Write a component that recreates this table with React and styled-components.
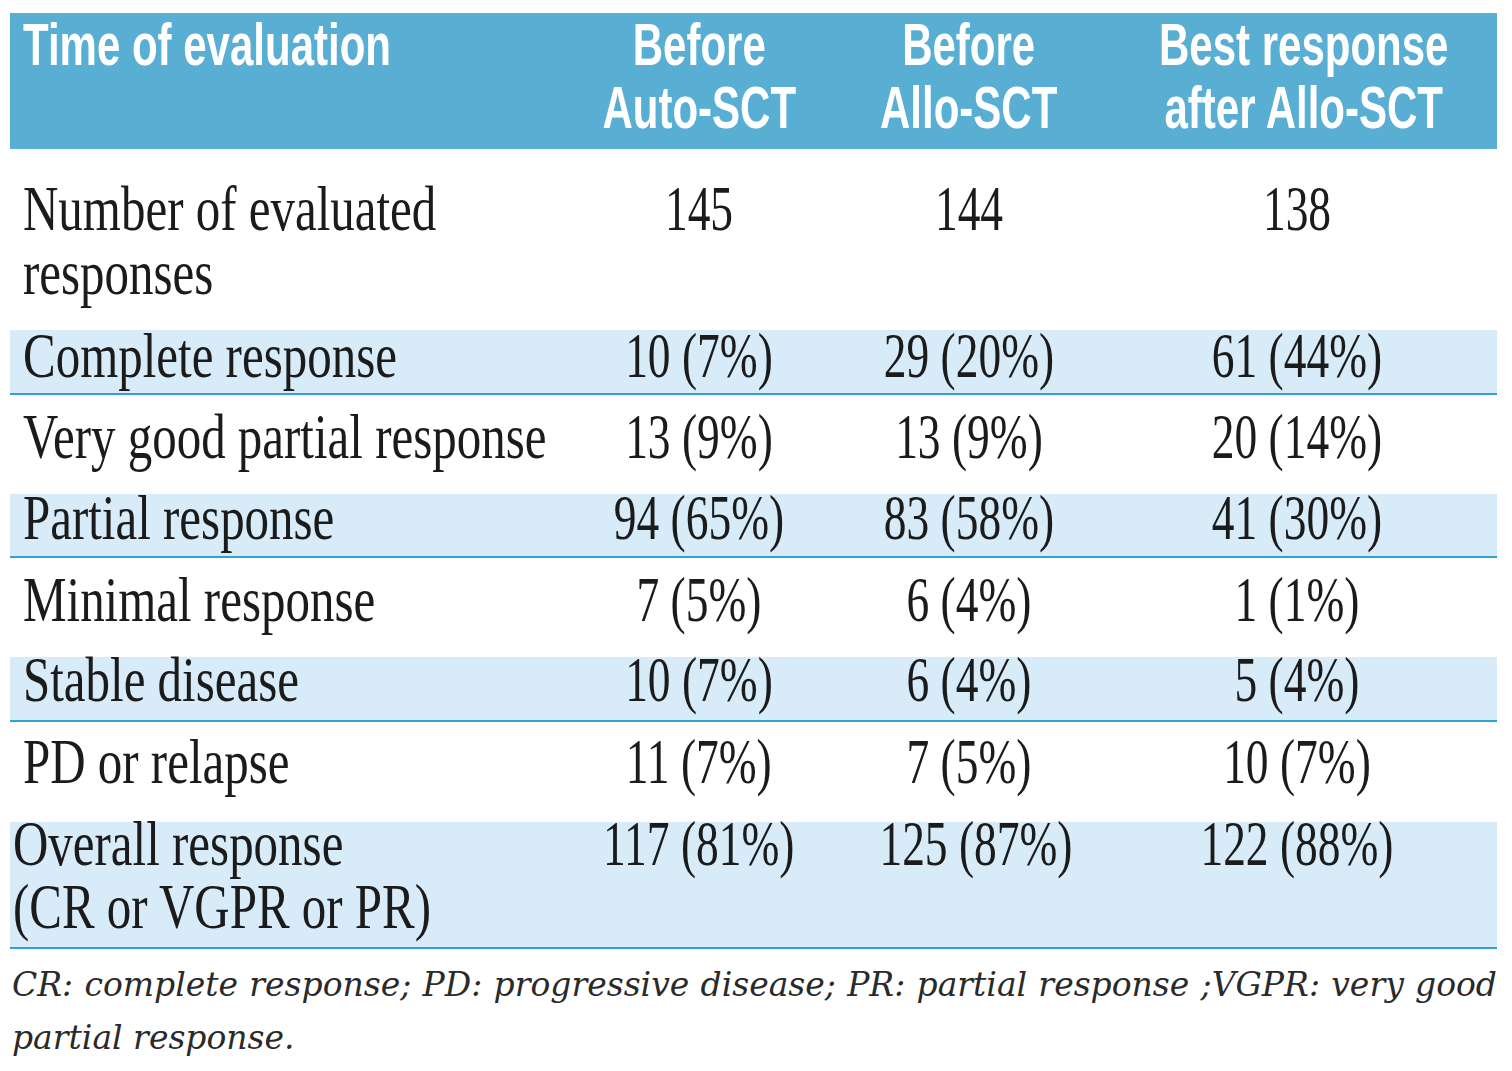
import React from "react";
import styled, { createGlobalStyle } from "styled-components";

const Global = createGlobalStyle`
  html, body { margin: 0; padding: 0; background: #ffffff; }
  body { font-family: "Liberation Serif", "Times New Roman", serif; color: #1b1b1b; }
`;

const COLS = "548px 282px 257px 400px";

const Page = styled.div`
  width: 1487px;
  padding: 13px 0 0 10px;
`;

const HeaderRow = styled.div`
  display: grid;
  grid-template-columns: ${COLS};
  height: 136px;
  background: #59aed3;
  color: #ffffff;
  font-family: "Liberation Sans", Arial, sans-serif;
  font-weight: 700;
  font-size: 60px;
  line-height: 63px;
`;

const HeadCell = styled.div`
  min-width: 0;
  text-align: ${(p) => (p.$first ? "left" : "center")};
  padding-left: ${(p) => (p.$first ? "13px" : "0")};
`;

const Squeeze = styled.span`
  display: inline-block;
  white-space: nowrap;
  text-align: ${(p) => (p.$center ? "center" : "left")};
  transform: scaleX(${(p) => p.$sx});
  transform-origin: ${(p) => (p.$center ? "center" : "left")} top;
`;

const Row = styled.div`
  display: grid;
  grid-template-columns: ${COLS};
  box-sizing: border-box;
  height: ${(p) => p.$h}px;
  background: ${(p) => (p.$shade ? "#d7ecf8" : "#ffffff")};
  border-bottom: ${(p) => (p.$shade ? "2px solid #2fa2d1" : "0")};
  font-size: 64px;
  line-height: ${(p) => p.$lh}px;
  color: #1b1b1b;
`;

const Cell = styled.div`
  min-width: 0;
  margin-top: ${(p) => p.$top}px;
  text-align: ${(p) => (p.$label ? "left" : "center")};
  padding-left: ${(p) => (p.$label ? `${p.$indent}px` : "0")};
`;

const Note = styled.div`
  width: 1487px;
  padding: 9px 0 0 2px;
  box-sizing: border-box;
  font-family: "DejaVu Serif", "Liberation Serif", serif;
  font-style: italic;
  font-weight: 400;
  font-size: 33px;
  line-height: 53px;
  color: #2a2a2a;
`;

const NoteLine = styled.div`
  text-align: ${(p) => (p.$justify ? "justify" : "left")};
  text-align-last: ${(p) => (p.$justify ? "justify" : "auto")};
  white-space: ${(p) => (p.$justify ? "normal" : "nowrap")};
`;

const rows = [
  { label: ["Number of evaluated", "responses"], vals: ["145", "144", "138"], h: 181, top: 28 },
  { label: ["Complete response"], vals: ["10 (7%)", "29 (20%)", "61 (44%)"], h: 65, top: -6, shade: true },
  { label: ["Very good partial response"], vals: ["13 (9%)", "13 (9%)", "20 (14%)"], h: 99, top: 10 },
  { label: ["Partial response"], vals: ["94 (65%)", "83 (58%)", "41 (30%)"], h: 64, top: -8, shade: true },
  { label: ["Minimal response"], vals: ["7 (5%)", "6 (4%)", "1 (1%)"], h: 99, top: 10 },
  { label: ["Stable disease"], vals: ["10 (7%)", "6 (4%)", "5 (4%)"], h: 65, top: -9, shade: true },
  { label: ["PD or relapse"], vals: ["11 (7%)", "7 (5%)", "10 (7%)"], h: 100, top: 8 },
  {
    label: ["Overall response", "(CR or VGPR or PR)"],
    vals: ["117 (81%)", "125 (87%)", "122 (88%)"],
    h: 127,
    top: -10,
    shade: true,
    indent: 3,
    lh: 63,
  },
];

const heads = [["Before", "Auto-SCT"], ["Before", "Allo-SCT"], ["Best response", "after Allo-SCT"]];

function Lines({ lines }) {
  return lines.map((l, i) => (
    <React.Fragment key={i}>
      {i > 0 && <br />}
      {l}
    </React.Fragment>
  ));
}

export default function App() {
  return (
    <>
      <Global />
      <Page>
        <HeaderRow>
          <HeadCell $first>
            <Squeeze $sx={0.7}>Time of evaluation</Squeeze>
          </HeadCell>
          {heads.map((h, i) => (
            <HeadCell key={i}>
              <Squeeze $sx={0.7} $center>
                <Lines lines={h} />
              </Squeeze>
            </HeadCell>
          ))}
        </HeaderRow>
        {rows.map((r, i) => (
          <Row key={i} $h={r.h} $shade={r.shade} $lh={r.lh || 64}>
            <Cell $label $indent={r.indent ?? 13} $top={r.top}>
              <Squeeze $sx={0.765}>
                <Lines lines={r.label} />
              </Squeeze>
            </Cell>
            {r.vals.map((v, j) => (
              <Cell key={j} $top={r.top}>
                <Squeeze $sx={0.71} $center>
                  {v}
                </Squeeze>
              </Cell>
            ))}
          </Row>
        ))}
        <Note>
          <NoteLine $justify>
            CR: complete response; PD: progressive disease; PR: partial response ;VGPR: very good
          </NoteLine>
          <NoteLine>partial response.</NoteLine>
        </Note>
      </Page>
    </>
  );
}
